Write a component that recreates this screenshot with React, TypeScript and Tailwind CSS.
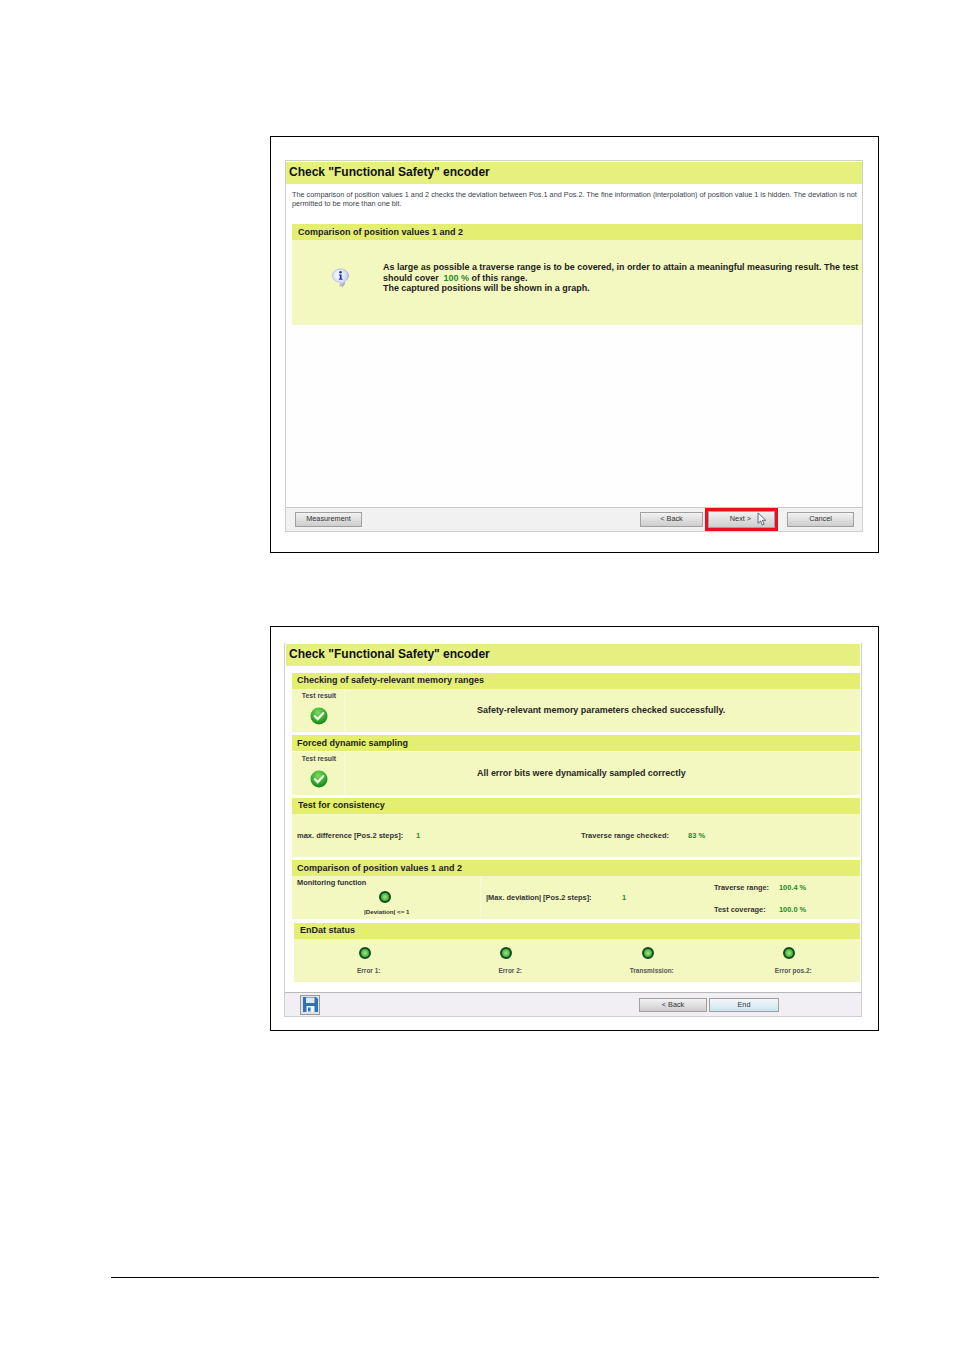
import type { ReactNode } from 'react';

const font = { fontFamily: '"Liberation Sans", Arial, sans-serif' };

function InfoIcon() {
  return (
    <svg width="20" height="22" viewBox="0 0 20 22">
      <defs>
        <radialGradient id="bubble" cx="0.4" cy="0.35" r="0.75">
          <stop offset="0" stopColor="#ffffff" />
          <stop offset="0.6" stopColor="#d5ddf8" />
          <stop offset="1" stopColor="#8494d4" />
        </radialGradient>
      </defs>
      <path d="M11 20.500c2-1.500 3-3.500 3.200-5l-4 .6z" fill="#a89c78" opacity="0.8" />
      <path
        d="M9.500 2C5 2 1.500 4.800 1.500 8.600c0 3.600 3.200 6.300 7.300 6.400.6 1.500.6 2.800-.1 4.200 2.500-1.200 4.600-3 5.600-5.400 2-1.200 3.200-3 3.200-5.200C17.500 4.800 14 2 9.500 2z"
        fill="url(#bubble)"
        stroke="#9aa6dc"
        strokeWidth="0.6"
      />
      <circle cx="9.500" cy="5.200" r="1.300" fill="#1a37a8" />
      <path d="M7.800 7.500h2.800v4.300h1v1H7.900v-1h.9V8.500h-1z" fill="#1a37a8" />
    </svg>
  );
}

function CheckIcon() {
  return (
    <svg width="18" height="18" viewBox="0 0 18 18">
      <defs>
        <radialGradient id="okGreen" cx="0.45" cy="0.3" r="0.8">
          <stop offset="0" stopColor="#7ddb5c" />
          <stop offset="0.6" stopColor="#2fa52a" />
          <stop offset="1" stopColor="#0d6f1b" />
        </radialGradient>
      </defs>
      <circle cx="9" cy="9" r="8.500" fill="url(#okGreen)" />
      <path d="M4.800 9.200l2.900 2.800 5.500-5.800" fill="none" stroke="#f4fbe9" strokeWidth="2.300" strokeLinecap="round" />
    </svg>
  );
}

function Led() {
  return (
    <span className="block h-[12px] w-[12px] rounded-full border-[2px] border-[#0f4f1f] bg-[radial-gradient(circle,#a4e67e_0%,#52b848_60%,#27812d_100%)]" />
  );
}

function SaveIcon() {
  return (
    <span className="flex h-[20px] w-[20px] items-center justify-center border border-[#9a9a9a] bg-[#dfe2e8]">
      <svg width="15" height="15" viewBox="0 0 15 15">
        <path d="M0 0h13l2 2v13H0z" fill="#2f70bc" />
        <path d="M3 .5h8.500V6H3z" fill="#dce8f6" />
        <path d="M3.500 9h8v6h-8z" fill="#eef3f8" />
        <path d="M5 10.500h2.500v4H5z" fill="#2f70bc" />
      </svg>
    </span>
  );
}

function Cursor() {
  return (
    <svg className="absolute left-[49px] top-[1px]" width="11" height="14" viewBox="0 0 11 14">
      <path d="M1 .8v10.500l2.600-2.300 1.700 4 1.800-.8-1.700-3.900h3.400z" fill="#f4f8fc" stroke="#55606c" strokeWidth="0.9" />
    </svg>
  );
}

function Button({ children, className = '' }: { children: ReactNode; className?: string }) {
  return (
    <div
      className={`flex items-center justify-center border border-[#a0a0a0] bg-gradient-to-b from-[#f2f2f2] to-[#cdcdcd] text-[7.300px] text-[#333] ${className}`}
    >
      {children}
    </div>
  );
}

function Section({ title, className = '' }: { title: string; className?: string }) {
  return (
    <div className={`flex h-[16px] items-center bg-[#e4ee72] text-[9px] font-bold text-[#1c1c1c] ${className}`}>
      {title}
    </div>
  );
}

function Green({ children }: { children: ReactNode }) {
  return <span className="font-bold text-[#1f8a2e]">{children}</span>;
}

function ResultPanel({ message, className = '' }: { message: string; className?: string }) {
  return (
    <div className={`flex h-[43px] bg-[#f3f8c0] ${className}`}>
      <div className="flex w-[53px] flex-col items-center border-r border-[#f7fad6] pl-[2px] pt-[3px]">
        <span className="text-[6.900px] font-bold leading-[8px] text-[#444]">Test result</span>
        <span className="mt-[7px]">
          <CheckIcon />
        </span>
      </div>
      <div className="flex flex-1 items-center pl-[132px] text-[8.950px] font-bold text-[#262626]">{message}</div>
    </div>
  );
}

function FirstFigure() {
  return (
    <div className="h-[417px] border border-black pl-[14px] pt-[23px]">
      <div className="flex h-[372px] w-[578px] flex-col border border-[#cfcfcf] bg-white">
        <div className="mt-[1px] flex h-[22px] items-center bg-[#e6f07f] pb-[2px] pl-[3px] text-[12px] font-bold text-[#111]">
          Check "Functional Safety" encoder
        </div>
        <div className="h-[40px] whitespace-nowrap pl-[6px] pt-[7px] text-[7.300px] leading-[8.500px] text-[#3a3f4d]">
          The comparison of position values 1 and 2 checks the deviation between Pos.1 and Pos.2. The fine information
          (interpolation) of position value 1 is hidden. The deviation is not
          <br />
          permitted to be more than one bit.
        </div>
        <Section title="Comparison of position values 1 and 2" className="ml-[6px] pl-[6px] pt-[1px]" />
        <div className="ml-[6px] flex h-[85px] bg-[#f3f8c0]">
          <div className="flex w-[91px] justify-center pl-[6px] pt-[27px]">
            <InfoIcon />
          </div>
          <div className="pt-[22px] text-[8.950px] font-bold leading-[10.500px] text-[#1c1c1c]">
            As large as possible a traverse range is to be covered, in order to attain a meaningful measuring result. The test
            <br />
            should cover&nbsp; <Green>100 %</Green> of this range.
            <br />
            The captured positions will be shown in a graph.
          </div>
        </div>
        <div className="flex-1 bg-[#fefefe]" />
        <div className="flex h-[24px] items-center border-t border-[#c8c8c8] bg-[#f1f1f1] pl-[9px]">
          <Button className="h-[15px] w-[67px]">Measurement</Button>
          <Button className="ml-auto h-[15px] w-[63px]">&lt; Back</Button>
          <div className="relative ml-[2px] h-[23px] w-[73px] border-[3px] border-[#e8101c]">
            <Button className="h-full w-full border-[#6fa8d0] from-[#d6ebfa] to-[#a4cff0] pr-[2px]">Next &gt;</Button>
            <Cursor />
          </div>
          <Button className="ml-[9px] mr-[8px] h-[15px] w-[67px]">Cancel</Button>
        </div>
      </div>
    </div>
  );
}

function SecondFigure() {
  return (
    <div className="h-[405px] border border-black pl-[13px] pt-[16px]">
      <div className="flex h-[374px] w-[578px] flex-col border-x border-b border-[#cfcfcf] bg-white">
        <div className="mx-[1px] mt-[1px] flex h-[22px] items-center bg-[#e5f080] pb-[2px] pl-[3px] text-[12px] font-bold text-[#111]">
          Check "Functional Safety" encoder
        </div>
        <div className="ml-[7px] mr-[1px] mt-[7px]">
          <Section title="Checking of safety-relevant memory ranges" className="pb-[1px] pl-[5px]" />
          <ResultPanel message="Safety-relevant memory parameters checked successfully." />
          <Section title="Forced dynamic sampling" className="mt-[3px] pl-[5px] pt-[1px]" />
          <ResultPanel message="All error bits were dynamically sampled correctly" className="mt-[1px]" />
          <Section title="Test for consistency" className="mt-[3px] pl-[6px]" />
          <div className="flex h-[43px] items-center bg-[#f3f8c0] pl-[5px] text-[7.500px] font-bold text-[#333]">
            <span className="w-[119px]">max. difference [Pos.2 steps]:</span>
            <span className="w-[165px]"><Green>1</Green></span>
            <span className="w-[107px]">Traverse range checked:</span>
            <Green>83 %</Green>
          </div>
          <Section title="Comparison of position values 1 and 2" className="mt-[3px] pl-[5px] pt-[1px]" />
          <div className="flex h-[43px] bg-[#f3f8c0] text-[7.400px] font-bold text-[#333]">
            <div className="flex w-[189px] flex-col border-r border-[#f7fad6] pl-[5px] pt-[2px]">
              <span className="leading-[10px]">Monitoring function</span>
              <span className="ml-[82px] mt-[3px]">
                <Led />
              </span>
              <span className="ml-[67px] mt-[5px] text-[6.200px] leading-[8px]">|Deviation| &lt;= 1</span>
            </div>
            <div className="flex w-[233px] items-center pl-[5px]">
              <span className="w-[136px]">|Max. deviation| [Pos.2 steps]:</span>
              <Green>1</Green>
            </div>
            <div className="flex flex-col gap-[12px] pt-[7px] leading-[10px]">
              <div className="flex">
                <span className="w-[65px]">Traverse range:</span>
                <Green>100.4 %</Green>
              </div>
              <div className="flex">
                <span className="w-[65px]">Test coverage:</span>
                <Green>100.0 %</Green>
              </div>
            </div>
          </div>
          <div className="ml-[2px] mt-[4px]">
            <Section title="EnDat status" className="pb-[1px] pl-[6px]" />
            <div className="grid h-[43px] grid-cols-4 bg-[#f3f8c0]">
              {['Error 1:', 'Error 2:', 'Transmission:', 'Error pos.2:'].map((label) => (
                <div key={label} className="flex flex-col items-center pt-[8px]">
                  <Led />
                  <span className="mt-[8px] pl-[8px] text-[6.500px] font-bold leading-[8px] text-[#555]">{label}</span>
                </div>
              ))}
            </div>
          </div>
        </div>
        <div className="mt-auto flex h-[24px] items-center border-t border-[#b8b8b8] bg-[#f1eff3] pl-[15px]">
          <SaveIcon />
          <Button className="ml-[319px] h-[14px] w-[68px] pt-[1px]">&lt; Back</Button>
          <Button className="ml-[2px] h-[14px] w-[70px] border-[#4aa4cf] from-[#f2f8fb] to-[#cfe3ee] pt-[1px] text-[#222]">End</Button>
        </div>
      </div>
    </div>
  );
}

export default function App() {
  return (
    <div className="flex h-[1350px] flex-col bg-white pt-[136px]" style={font}>
      <div className="ml-[270px] flex w-[609px] flex-col gap-[73px]">
        <FirstFigure />
        <SecondFigure />
      </div>
      <div className="ml-[111px] mt-[246px] h-px w-[768px] bg-black" />
    </div>
  );
}
